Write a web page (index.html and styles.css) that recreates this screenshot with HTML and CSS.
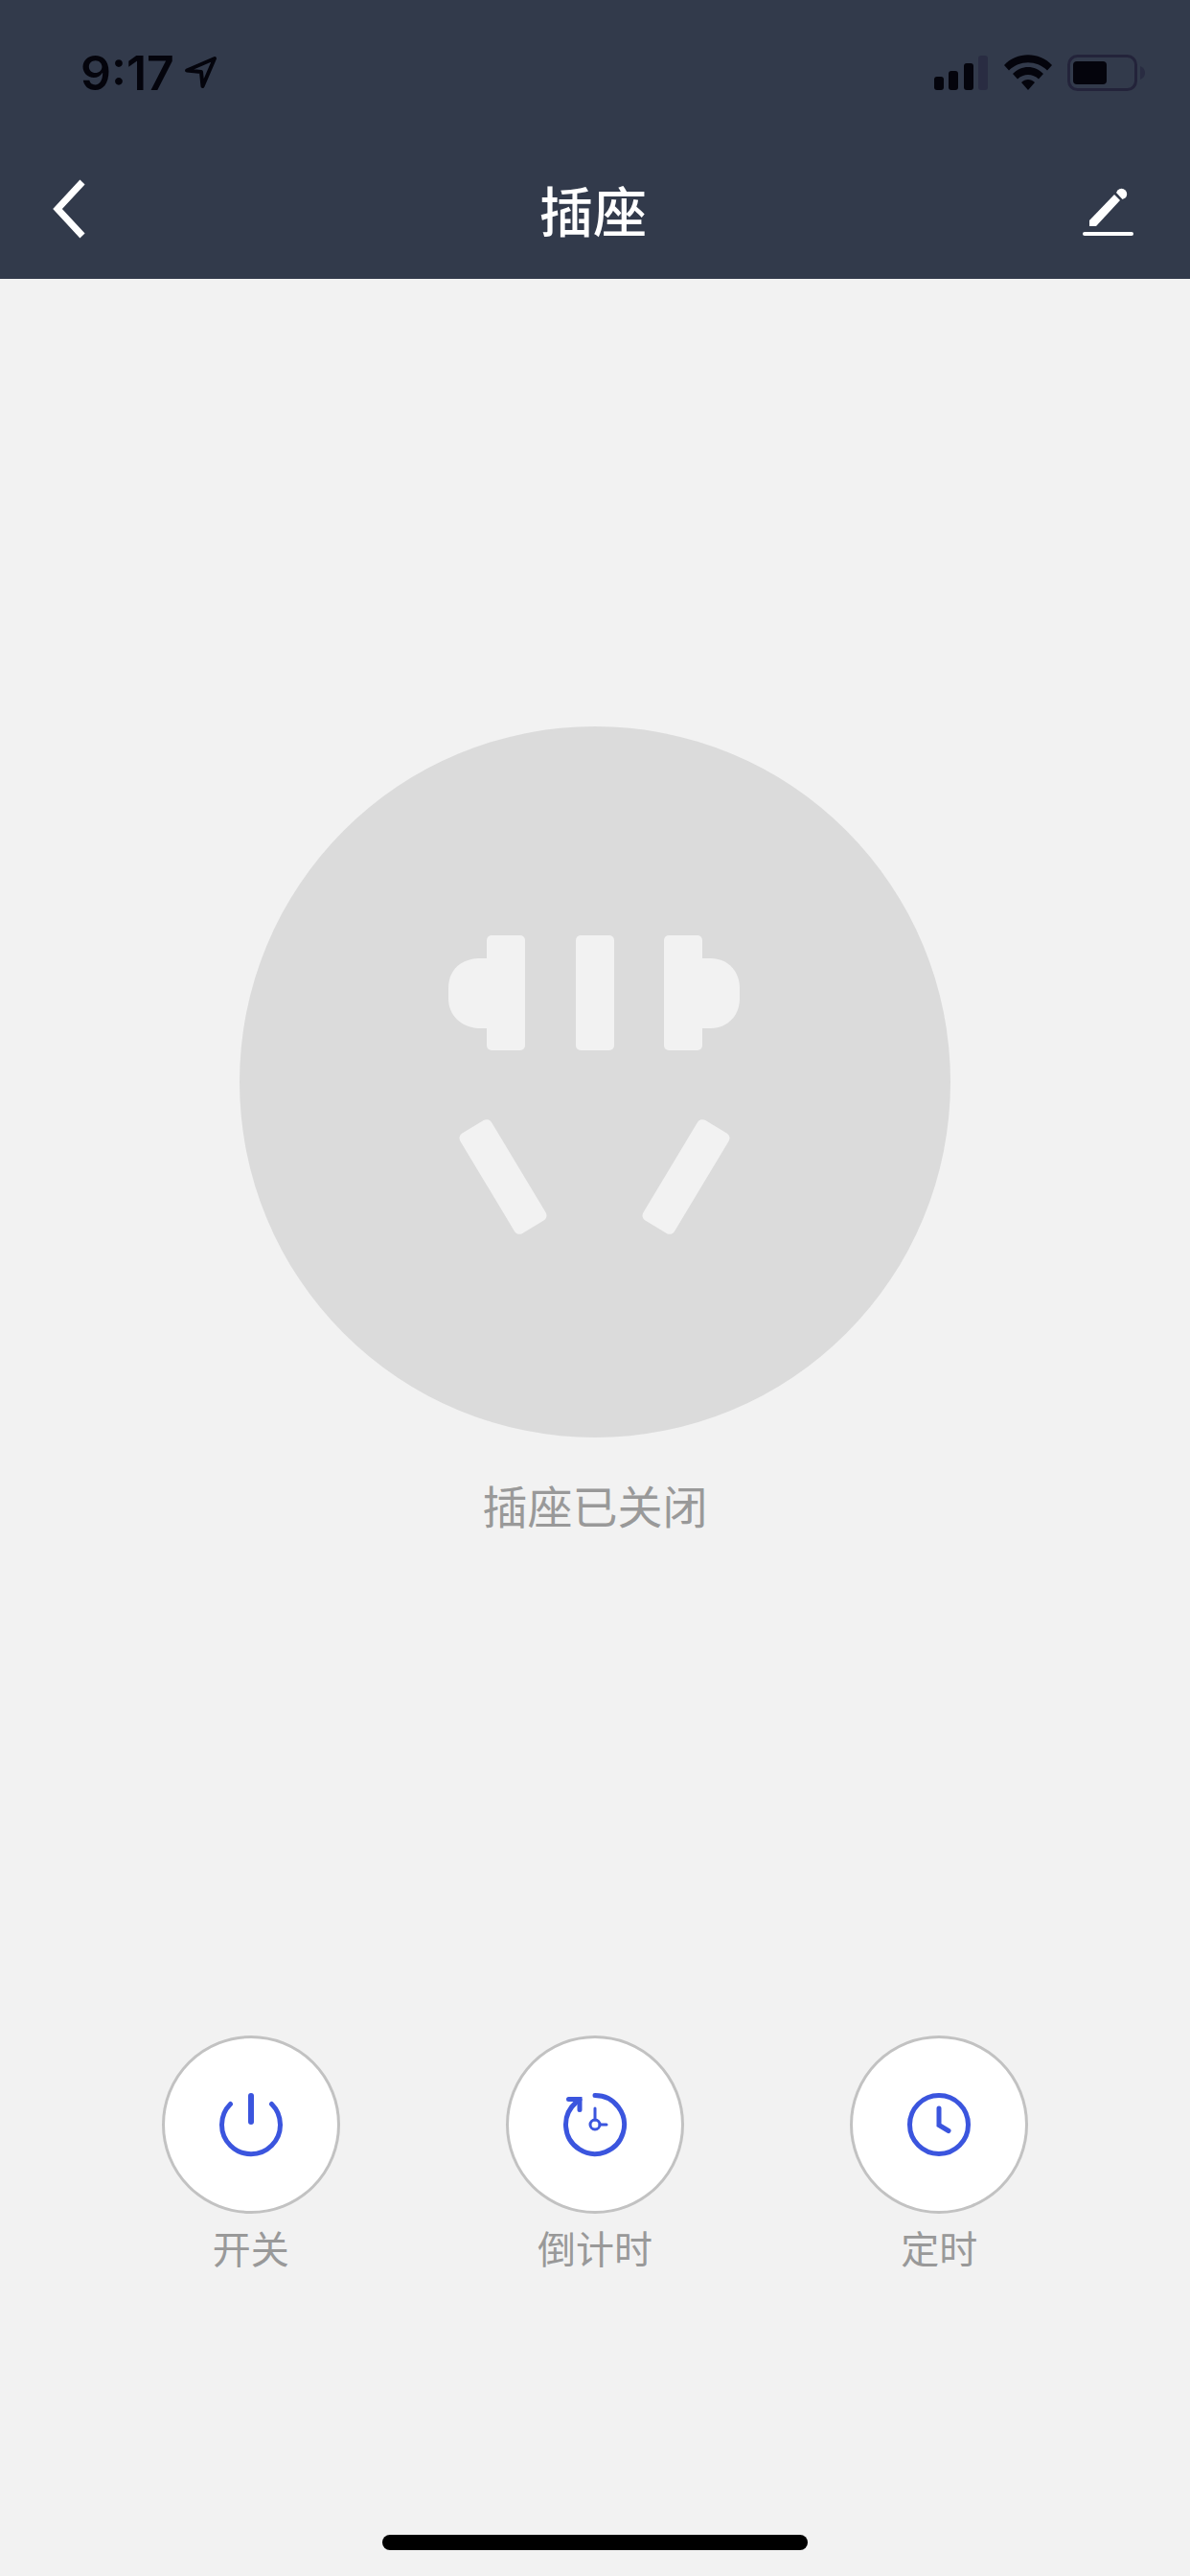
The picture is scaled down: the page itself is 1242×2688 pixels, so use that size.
FILE: index.html
```
<!doctype html>
<html lang=zh-CN>
<head>
	<meta charset=utf-8>
	<meta name=viewport content="width=device-width">
	<title>插座</title>
	<link rel="stylesheet" href="styles.css">
</head>

<body>
	<header class=header>
		<div class=status-bar>
			<div class=clock>
				<time>9:17</time>
				<svg class=location width=36 height=36 viewBox="0 0 36 36" aria-hidden=true>
					<path d="M3 15.500L32 3L19.500 32L18 17Z"/>
				</svg>
			</div>
			<div class=indicators>
				<svg width=57 height=38 viewBox="0 0 57 38" aria-label=信号>
					<rect x=0 y=23 width=10 height=14 rx=3 />
					<rect x=15 y=17 width=10 height=20 rx=3 />
					<rect x=31 y=9 width=10 height=28 rx=3 />
					<rect class=dim x=46 y=1 width=10 height=36 rx=3 />
				</svg>
				<svg width=50 height=38 viewBox="0 0 50 38" aria-label=Wi-Fi>
					<path d="M0 11C13-3.500 37-3.500 50 11L45 16.500C34 5.500 16 5.500 5 16.500Z"/>
					<path d="M9 20C18 10.500 32 10.500 41 20L36 25.500C30 19.500 20 19.500 14 25.500Z"/>
					<path d="M18 29C22 25 28 25 32 29L25 37Z"/>
				</svg>
				<svg width=81 height=38 viewBox="0 0 81 38" aria-label=电池>
					<rect class=case x=1.500 y=1.500 width=70 height=35 rx=9 />
					<rect x=6 y=7 width=35 height=24 rx=4 />
					<path class=dim d="M76 12Q81 14 81 19T76 26Z"/>
				</svg>
			</div>
		</div>
		<nav class=nav-bar>
			<button class=nav-button aria-label=返回>
				<svg width=36 height=64 viewBox="0 0 36 64"><path class=chevron d="M32 4L6 32L32 60"/></svg>
			</button>
			<h1 class=title>插座</h1>
			<button class=nav-button aria-label=编辑>
				<svg width=56 height=60 viewBox="0 0 56 60">
					<path d="M9 42L35 15L41 21L16 48H9Z"/>
					<path d="M37 13L38.500 10.500A5.500 5.500 0 1 1 46.500 18.500L43.500 20Z"/>
					<rect x=2 y=54 width=53 height=4 rx=2 />
				</svg>
			</button>
		</nav>
	</header>

	<main class=device>
		<svg class=socket viewBox="0 0 742 742" aria-hidden=true>
			<circle class=plate cx=371 cy=371 r=371 />
			<rect x=258 y=218 width=40 height=120 rx=5 />
			<rect x=351 y=218 width=40 height=120 rx=5 />
			<rect x=443 y=218 width=40 height=120 rx=5 />
			<path d="M260 242H249C230 243 218 255 218 273V284C218 302 232 314 249 315H260Z"/>
			<path d="M481 242H492C509 242 522 255 522 273V284C522 302 509 315 492 315H481Z"/>
			<rect x=256 y=409 width=38 height=122 rx=6 transform="rotate(-31 275 470)"/>
			<rect x=447 y=409 width=38 height=122 rx=6 transform="rotate(31 466 470)"/>
		</svg>
		<p class=state>插座已关闭</p>
	</main>

	<div class=actions>
		<button class=action>
			<span class=disc>
				<svg width=72 height=72 viewBox="0 0 72 72">
					<path d="M14.500 14.500A30.500 30.500 0 1 0 57.500 14.500"/>
					<path class=bold d="M36 6V33"/>
				</svg>
			</span>
			开关
		</button>
		<button class=action>
			<span class=disc>
				<svg width=72 height=72 viewBox="0 0 72 72">
					<path d="M36 5.500A30.500 30.500 0 1 1 16 13L20 10"/>
					<path d="M8.500 9.500H20V20.500"/>
					<circle class=thin cx=36 cy=36 r=5 />
					<path class=thin d="M36 19V31M41 36H48"/>
				</svg>
			</span>
			倒计时
		</button>
		<button class=action>
			<span class=disc>
				<svg width=72 height=72 viewBox="0 0 72 72">
					<circle cx=36 cy=36 r=30.500 />
					<path d="M36 19V36.500L46 42.500"/>
				</svg>
			</span>
			定时
		</button>
	</div>

	<div class=home-indicator></div>
</body>
</html>
```

FILE: styles.css
```
body {
	display: flex;
	flex-direction: column;
	min-height: 100vh;
	margin: 0;
	background: #f2f2f2;
	color: #999;
	font-family: "Noto Sans CJK SC", sans-serif;
}

svg {
	display: block;
	flex-shrink: 0;
}

button {
	padding: 0;
	border: none;
	background: none;
	color: inherit;
	font: inherit;
	cursor: pointer;
}

.header {
	background: #323a4b;
	color: #fff;
}

.status-bar {
	display: flex;
	justify-content: space-between;
	align-items: center;
	height: 152px;
	padding: 0 47px 0 84px;
	color: #04040c;
	fill: currentColor;

	& .dim {fill: #292c42}

	& .case {
		fill: none;
		stroke: #23233a;
		stroke-width: 3;
	}
}

.clock {
	display: flex;
	align-items: center;
	gap: 10px;
	font: 600 50px/60px Inter, sans-serif;
}

.location {
	fill: none;
	stroke: currentColor;
	stroke-width: 4;
	stroke-linejoin: round;
}

.indicators {
	display: flex;
	gap: 16px;
}

.nav-bar {
	display: grid;
	grid-template-columns: 1fr auto 1fr;
	align-items: center;
	height: 139px;
	padding: 0 58px 8px 54px;
	box-sizing: border-box;
}

.nav-button {
	fill: #fff;

	&:first-child {justify-self: start}
	&:last-child {justify-self: end}
}

.chevron {
	fill: none;
	stroke: #fff;
	stroke-width: 7;
}

.title {
	margin: 0;
	font-size: 56px;
	font-weight: 500;
	line-height: 80px;
}

.device {
	display: flex;
	flex-direction: column;
	align-items: center;
	padding: 467px 40px 0;
}

.socket {
	width: 742px;
	max-width: 100%;
	fill: #f2f2f2;
}

.plate {fill: #dbdbdb}

.state {
	margin: 36px 0;
	font-size: 47px;
	line-height: 68px;
}

.actions {
	display: grid;
	grid-template-columns: repeat(3, 1fr);
	margin-top: auto;
	padding: 0 82px 272px;
}

.action {
	display: flex;
	flex-direction: column;
	align-items: center;
	gap: 7px;
	font-size: 40px;
	line-height: 56px;
}

.disc {
	display: grid;
	place-items: center;
	width: 186px;
	height: 186px;
	border: 3px solid #c2c2c2;
	border-radius: 50%;
	box-sizing: border-box;
	background: #fff;

	& svg {
		fill: none;
		stroke: #3b55de;
		stroke-width: 5;
		stroke-linecap: round;
	}

	& .bold {stroke-width: 6}
	& .thin {stroke-width: 3}
}

.home-indicator {
	align-self: center;
	width: 444px;
	max-width: 60%;
	height: 16px;
	margin-bottom: 27px;
	border-radius: 8px;
	background: #000;
}
```
